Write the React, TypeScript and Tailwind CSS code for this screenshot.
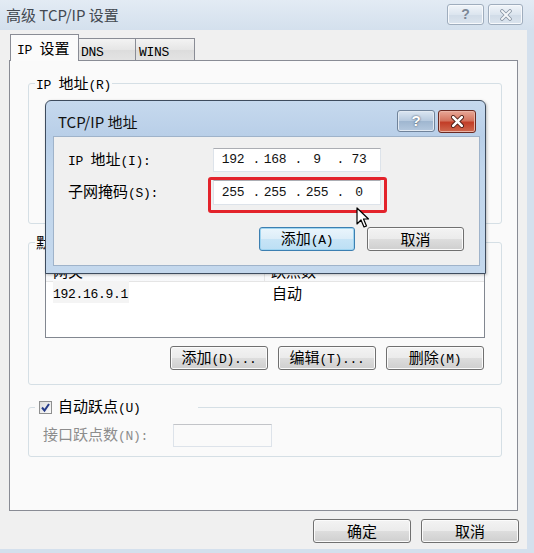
import React from 'react';

// SimSun-like mix: ASCII in a mono face, CJK a bit larger
const T: React.FC<{ s: string }> = ({ s }) => (
  <span>
    {s
      .split(/([\x20-\x7e]+)/)
      .filter(Boolean)
      .map((p, i) =>
        /^[\x20-\x7e]+$/.test(p) ? (
          <span key={i} className="font-['Liberation_Mono',monospace] text-[13px] tracking-[-0.3px]">
            {p}
          </span>
        ) : (
          <span key={i} className="font-['Noto_Sans_CJK_SC',sans-serif] text-[15px]">
            {p}
          </span>
        )
      )}
  </span>
);

const Btn: React.FC<{ label: string; className?: string; def?: boolean }> = ({ label, className = '', def }) => (
  <div
    className={`h-[24px] flex items-center justify-center rounded-[3px] border whitespace-pre leading-[16px] ${
      def
        ? 'border-[#3c7fb1] bg-[linear-gradient(#eaf5fc_0%,#dcedf8_50%,#c7e4f6_51%,#bcdff4_100%)] shadow-[inset_0_0_0_1px_#9fd4f0]'
        : 'border-[#707070] bg-[linear-gradient(#f3f3f3_0%,#ebebeb_50%,#dddddd_51%,#cfcfcf_100%)] shadow-[inset_0_0_0_1px_#fbfbfb]'
    } ${className}`}
  >
    <T s={label} />
  </div>
);

const XGlyph: React.FC<{ outline: string; fill: string; size: number; w: number }> = ({ outline, fill, size, w }) => (
  <svg width={size} height={size} viewBox="0 0 12 12">
    <path d="M2 2 L10 10 M10 2 L2 10" stroke={outline} strokeWidth={w + 1.6} strokeLinecap="round" />
    <path d="M2 2 L10 10 M10 2 L2 10" stroke={fill} strokeWidth={w} strokeLinecap="round" />
  </svg>
);

// four-field address box, dots sit just before the next number
const IpBox: React.FC<{ parts: string[] }> = ({ parts }) => (
  <div className="w-[168px] h-full flex items-center pl-[4px] bg-white border border-[#dde3ea] border-t-[#abadb3] font-['Liberation_Mono',monospace] text-[13px] tracking-[-0.3px] text-[#111]">
    {parts.map((p, i) => (
      <React.Fragment key={i}>
        {i > 0 && <span className="w-[12px] text-right">.</span>}
        <span className="w-[30px] text-center">{p}</span>
      </React.Fragment>
    ))}
  </div>
);

export default function App() {
  return (
    <div className="relative w-[534px] h-[553px] overflow-hidden bg-[#d4e0ed] text-black select-none">
      {/* title bar */}
      <div className="h-[30px] flex items-start justify-between pl-[6px] pr-[11px] bg-[linear-gradient(#e3ebf4,#d4e0ed)]">
        <div className="h-[30px] flex items-center font-['Noto_Sans_CJK_SC',sans-serif] text-[15px] text-[#434951]">
          高级 TCP/IP 设置
        </div>
        <div className="flex gap-[4px] pt-[4px]">
          <div className="w-[37px] h-[21px] rounded-[3px] border border-[#9fadbd] bg-[linear-gradient(#f1f5f9,#dce5ef_50%,#d0dbe7_51%,#dbe4ee)] shadow-[inset_0_0_0_1px_#f7f9fc] flex items-center justify-center font-['Liberation_Sans',sans-serif] font-bold text-[14px] text-[#7d8896]">
            ?
          </div>
          <div className="w-[35px] h-[21px] rounded-[3px] border border-[#9fadbd] bg-[linear-gradient(#f1f5f9,#dce5ef_50%,#d0dbe7_51%,#dbe4ee)] shadow-[inset_0_0_0_1px_#f7f9fc] flex items-center justify-center">
            <XGlyph outline="#8793a1" fill="#f4f6f9" size={12} w={2} />
          </div>
        </div>
      </div>

      {/* client area */}
      <div className="w-[527px] h-[519px] bg-[#f0f0f0] flex flex-col">
        {/* tabs */}
        <div className="pl-[10px] pt-[4px] flex items-end relative z-10 whitespace-pre leading-[16px]">
          <div className="w-[69px] h-[27px] -mb-px border border-b-0 border-[#898c95] bg-[#fbfbfb] pl-[6px] pt-[5px]">
            <T s="IP 设置" />
          </div>
          <div className="w-[57px] h-[22px] border border-l-0 border-b-0 border-[#898c95] bg-[linear-gradient(#f3f3f3,#e6e6e6_50%,#dcdcdc_51%,#e3e3e3)] pl-[2px] pt-[3px]">
            <T s="DNS" />
          </div>
          <div className="w-[59px] h-[22px] border border-l-0 border-b-0 border-[#898c95] bg-[linear-gradient(#f3f3f3,#e6e6e6_50%,#dcdcdc_51%,#e3e3e3)] pl-[3px] pt-[3px]">
            <T s="WINS" />
          </div>
        </div>

        {/* tab panel */}
        <div className="ml-[9px] w-[509px] h-[451px] border border-[#898c95] bg-[#fafafa] flex flex-col whitespace-pre leading-[16px]">
          <fieldset className="ml-[18px] mt-[14px] w-[474px] h-[149px] border border-[#d5dfe5] rounded-[3px] p-0">
            <legend className="ml-[6px] px-[1px] h-[16px]">
              <T s="IP 地址(R)" />
            </legend>
          </fieldset>

          <fieldset className="ml-[18px] mt-[10px] w-[474px] h-[151px] border border-[#d5dfe5] rounded-[3px] p-0">
            <legend className="ml-[6px] px-[1px] h-[16px]">
              <T s="默认网关(F):" />
            </legend>
            <div className="ml-[16px] mt-[10px] w-[440px] h-[78px] border border-[#828790] bg-white flex flex-col">
              <div className="h-[21px] flex border-b border-[#e5e5e5] bg-[linear-gradient(#ffffff,#f7f8fa)]">
                <div className="w-[219px] h-full flex items-center pl-[7px] border-r border-[#e5e5e5]">
                  <T s="网关" />
                </div>
                <div className="flex items-center pl-[6px]">
                  <T s="跃点数" />
                </div>
              </div>
              <div className="h-[20px] mt-[1px] flex items-center">
                <div className="w-[220px] pl-[7px]">
                  <span className="bg-[#f4f4f4] pr-[1px]">
                    <T s="192.16.9.1" />
                  </span>
                </div>
                <div className="pl-[6px]">
                  <T s="自动" />
                </div>
              </div>
            </div>
            <div className="mt-[8px] flex justify-end gap-[10px] pr-[17px]">
              <Btn label="添加(D)..." className="w-[98px]" />
              <Btn label="编辑(T)..." className="w-[98px]" />
              <Btn label="删除(M)" className="w-[98px]" />
            </div>
          </fieldset>

          <fieldset className="ml-[18px] mt-[14px] w-[474px] h-[58px] border border-[#d5dfe5] rounded-[3px] p-0">
            <legend className="ml-[6px] w-[163px] h-[16px] pl-[4px] flex items-center gap-[6px] bg-[#fafafa]">
              <div className="w-[13px] h-[13px] border border-[#8e8f8f] bg-[linear-gradient(135deg,#dcdcdc,#fbfbfb)] flex items-center justify-center">
                <svg width="11" height="11" viewBox="0 0 11 11">
                  <path d="M2 5.5 L4.5 8.5 L9 2" fill="none" stroke="#263c8a" strokeWidth="2" />
                </svg>
              </div>
              <T s="自动跃点(U)" />
            </legend>
            <div className="mt-[9px] ml-[14px] flex items-center text-[#8d8d8d]">
              <div className="w-[130px]">
                <T s="接口跃点数(N):" />
              </div>
              <div className="w-[99px] h-[23px] border border-[#dde3ea] border-t-[#c2c4c8] bg-[#fafafa]" />
            </div>
          </fieldset>
        </div>

        {/* OK / Cancel */}
        <div className="mt-[8px] flex justify-end gap-[10px] pr-[8px]">
          <Btn label="确定" className="w-[98px]" />
          <Btn label="取消" className="w-[98px]" />
        </div>
      </div>

      {/* TCP/IP address dialog on top */}
      <div className="absolute left-[45px] top-[100px] w-[441px] h-[174px] rounded-t-[6px] border border-[#3e4c5e] bg-[linear-gradient(#c6d9ee,#b9cfe8_20%,#c1d6ec_40%,#c4d8ed)] shadow-[1px_1px_3px_rgba(0,0,0,0.25)] flex flex-col whitespace-pre leading-[16px]">
        <div className="h-[35px] flex items-start justify-between pl-[12px] pr-[9px]">
          <div className="pt-[13px] font-['Noto_Sans_CJK_SC',sans-serif] text-[15px] text-[#111]">TCP/IP 地址</div>
          <div className="flex gap-[3px] pt-[9px]">
            <div className="w-[38px] h-[22px] rounded-[3px] border border-[#70839a] bg-[linear-gradient(#dbe6f2,#b6c9de_50%,#9fb6d0_51%,#b4c8de)] shadow-[inset_0_0_0_1px_#e2eaf3] flex items-center justify-center font-['Liberation_Sans',sans-serif] font-bold text-[15px] text-white [text-shadow:0_0_2px_#2d3a4a]">
              ?
            </div>
            <div className="w-[38px] h-[23px] rounded-[3px] border border-[#6b2a22] bg-[linear-gradient(#e9a898,#d47560_45%,#c23d27_55%,#d06a50)] shadow-[inset_0_0_0_1px_#eab4a6] flex items-center justify-center">
              <XGlyph outline="#4a1c14" fill="#ffffff" size={13} w={2.4} />
            </div>
          </div>
        </div>
        <div className="relative ml-[7px] mr-[5px] h-[130px] border border-[#9fb3ca] bg-[#f0f0f0]">
          <div className="pt-[11px] pl-[14px] flex flex-col">
            <div className="h-[24px] flex items-center">
              <div className="w-[145px]">
                <T s="IP 地址(I):" />
              </div>
              <IpBox parts={['192', '168', '9', '73']} />
            </div>
            <div className="mt-[8px] h-[25px] flex items-center">
              <div className="w-[145px]">
                <T s="子网掩码(S):" />
              </div>
              <IpBox parts={['255', '255', '255', '0']} />
            </div>
          </div>
          <div className="mt-[22px] flex justify-end gap-[12px] pr-[15px]">
            <Btn label="添加(A)" def className="w-[96px]" />
            <Btn label="取消" className="w-[97px]" />
          </div>
          {/* red highlight */}
          <div className="absolute left-[154px] top-[40px] w-[179px] h-[36px] border-[3px] border-[#e3232b] rounded-[3px]" />
        </div>
      </div>

      {/* mouse pointer */}
      <svg className="absolute left-[356px] top-[207px]" width="14" height="22" viewBox="0 0 14 22">
        <path d="M1 1 L1 17 L5 13 L8 20 L10.5 19 L7.5 12 L12.5 12 Z" fill="#fff" stroke="#000" strokeWidth="1.2" strokeLinejoin="round" />
      </svg>
    </div>
  );
}
